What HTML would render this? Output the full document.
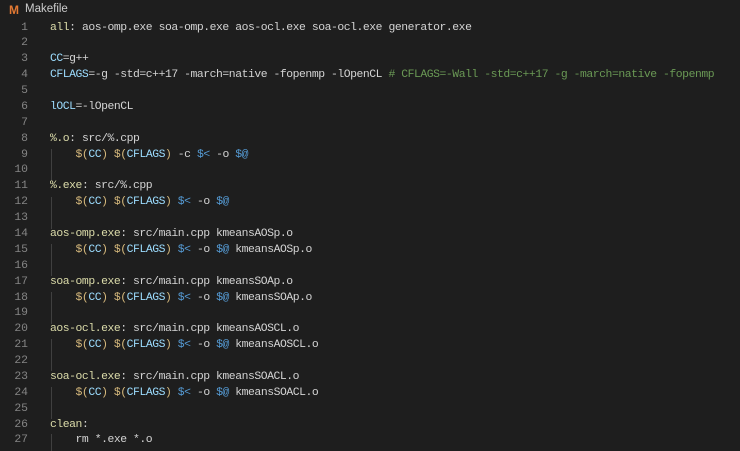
<!DOCTYPE html>
<html><head><style>
body{margin:0;width:740px;height:451px;background:#1e1e1e;overflow:hidden;font-family:"Liberation Mono",monospace;}
.tab{position:absolute;left:0;top:0;width:740px;height:20px;font-family:"Liberation Sans",sans-serif;font-size:11.5px;color:#cccccc;}
.tab .m{position:absolute;left:9px;top:3px;color:#e37933;font-weight:bold;font-size:12px;}
.tab .n{position:absolute;left:25px;top:3px;}
.l{position:absolute;left:0;height:16px;line-height:16px;font-size:11.4px;letter-spacing:-0.45px;white-space:pre;color:#d4d4d4;}
.num{position:absolute;left:0;width:28px;text-align:right;color:#858585;letter-spacing:0}
.c{position:absolute;left:50px;}
.t{color:#dcdcaa}.v{color:#9cdcfe}.o{color:#d7ba7d}.a{color:#569cd6}.g{color:#6a9955}
.guide{position:absolute;left:51px;width:1px;background:#404040;}
</style></head><body>
<div class="tab"><span class="m">M</span><span class="n">Makefile</span></div>
<div class="guide" style="top:149px;height:32px"></div>
<div class="guide" style="top:197px;height:32px"></div>
<div class="guide" style="top:244px;height:32px"></div>
<div class="guide" style="top:292px;height:32px"></div>
<div class="guide" style="top:339px;height:32px"></div>
<div class="guide" style="top:387px;height:32px"></div>
<div class="guide" style="top:434px;height:17px"></div>
<div id="code"></div>
<script>
var D='<span class="o">$(</span><span class="v">CC</span><span class="o">)</span> <span class="o">$(</span><span class="v">CFLAGS</span><span class="o">)</span>';
var L=[
'<span class="t">all</span>: aos-omp.exe soa-omp.exe aos-ocl.exe soa-ocl.exe generator.exe','',
'<span class="v">CC</span>=g++',
'<span class="v">CFLAGS</span>=-g -std=c++17 -march=native -fopenmp -lOpenCL <span class="g"># CFLAGS=-Wall -std=c++17 -g -march=native -fopenmp</span>','',
'<span class="v">lOCL</span>=-lOpenCL','',
'<span class="t">%.o</span>: src/%.cpp',
'    '+D+' -c <span class="a">$&lt;</span> -o <span class="a">$@</span>','',
'<span class="t">%.exe</span>: src/%.cpp',
'    '+D+' <span class="a">$&lt;</span> -o <span class="a">$@</span>','',
'<span class="t">aos-omp.exe</span>: src/main.cpp kmeansAOSp.o',
'    '+D+' <span class="a">$&lt;</span> -o <span class="a">$@</span> kmeansAOSp.o','',
'<span class="t">soa-omp.exe</span>: src/main.cpp kmeansSOAp.o',
'    '+D+' <span class="a">$&lt;</span> -o <span class="a">$@</span> kmeansSOAp.o','',
'<span class="t">aos-ocl.exe</span>: src/main.cpp kmeansAOSCL.o',
'    '+D+' <span class="a">$&lt;</span> -o <span class="a">$@</span> kmeansAOSCL.o','',
'<span class="t">soa-ocl.exe</span>: src/main.cpp kmeansSOACL.o',
'    '+D+' <span class="a">$&lt;</span> -o <span class="a">$@</span> kmeansSOACL.o','',
'<span class="t">clean</span>:',
'    rm *.exe *.o'];
var h='';
for(var i=0;i<L.length;i++){var y=19.5+i*15.88;h+='<div class="l" style="top:'+y.toFixed(1)+'px;width:740px"><span class="num">'+(i+1)+'</span><span class="c">'+L[i]+'</span></div>';}
document.getElementById('code').innerHTML=h;
</script>
</body></html>
